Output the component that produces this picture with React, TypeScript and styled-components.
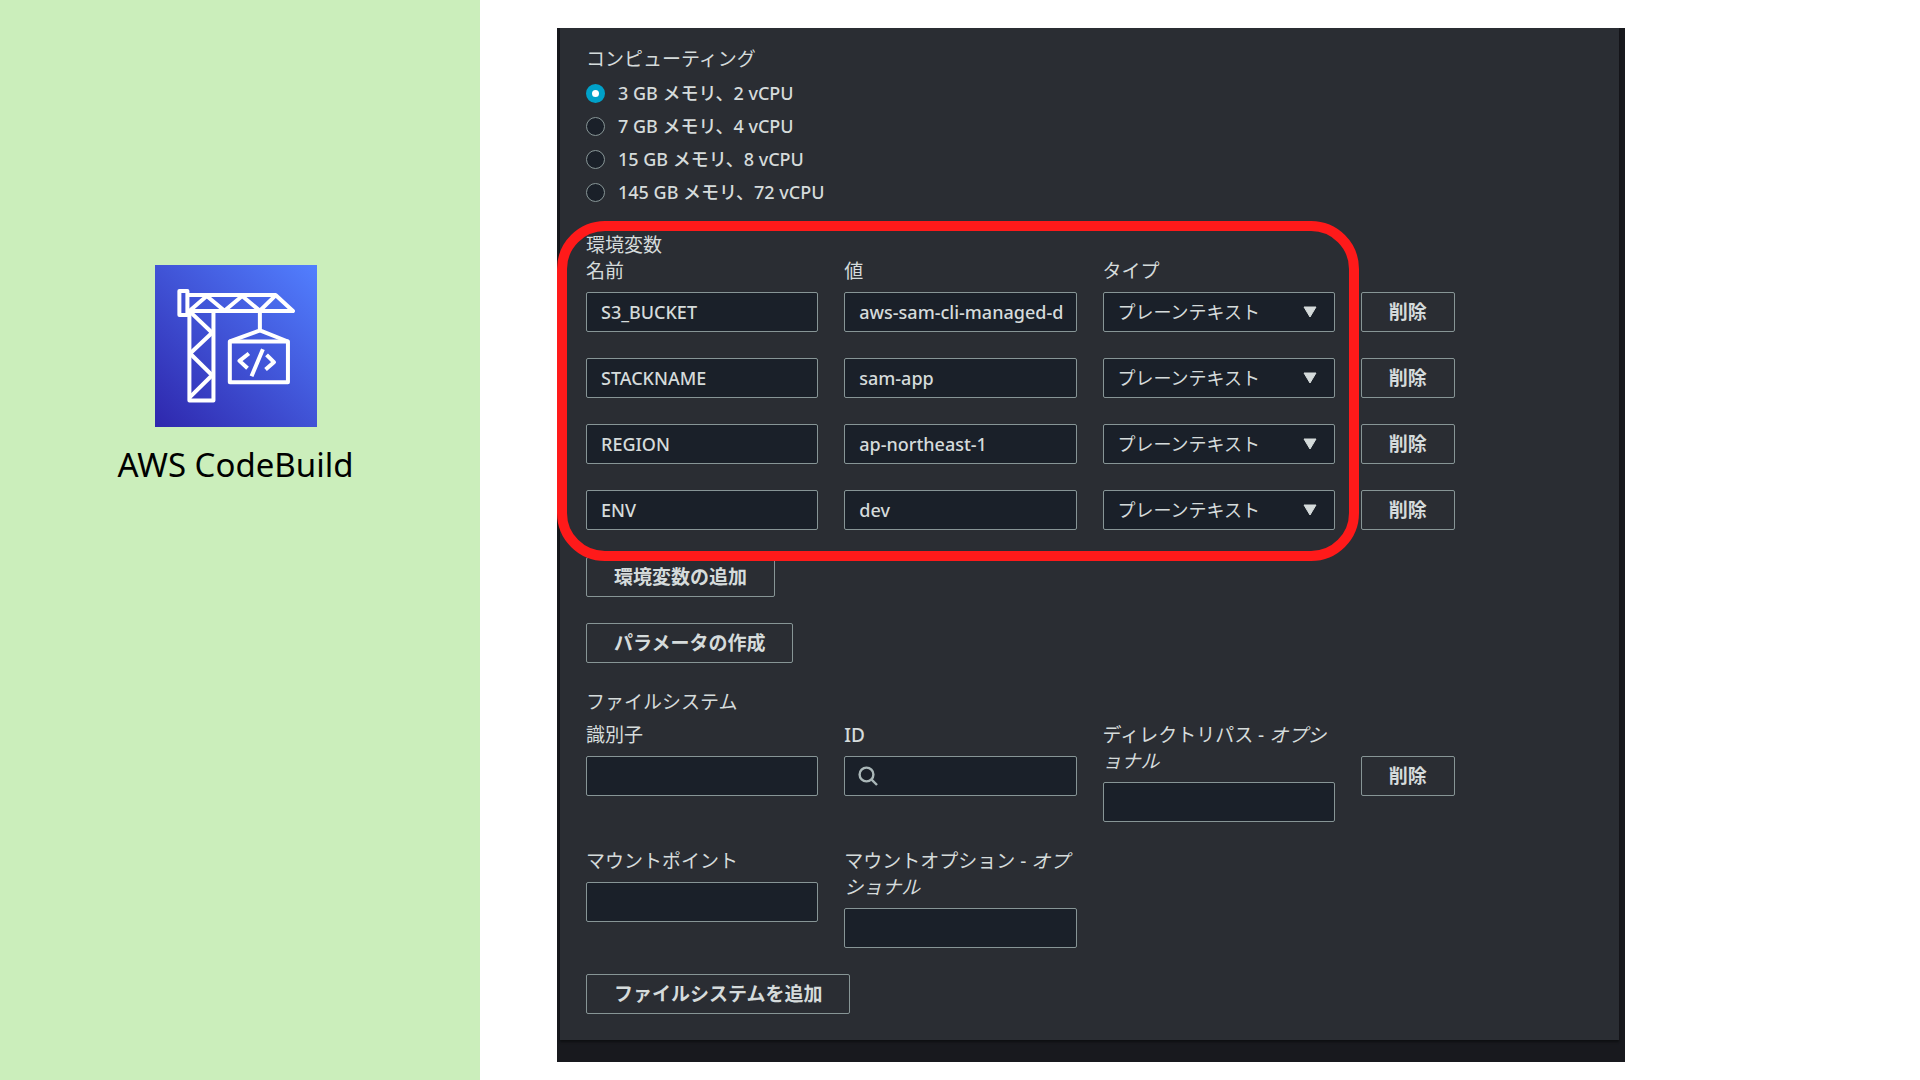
import React from "react";
import styled, { createGlobalStyle } from "styled-components";

const GlobalStyle = createGlobalStyle`
  *, *::before, *::after { box-sizing: border-box; }
  body {
    margin: 0;
    background: #ffffff;
    font-family: "Noto Sans", "Noto Sans CJK JP", sans-serif;
  }
  button, input, select { font: inherit; color: inherit; margin: 0; }
`;

const Page = styled.div`
  display: flex;
  min-height: 100vh;
`;

const Sidebar = styled.aside`
  flex: 0 0 25%;
  display: flex;
  flex-direction: column;
  align-items: center;
  gap: 16px;
  padding: 265px 9px 0 0;
  background: #cbeebb;
`;

const ServiceName = styled.h1`
  margin: 0;
  font-size: 33px;
  line-height: 44px;
  font-weight: 400;
  color: #000000;
`;

const Main = styled.main`
  flex: 1;
  min-width: 0;
  padding: 28px 295px 18px 77px;
`;

const Console = styled.div`
  padding: 0 6px 22px 3px;
  background: #18191e;
`;

const Card = styled.form`
  display: flex;
  flex-direction: column;
  gap: 27px;
  padding: 18px 26px 26px;
  background: #2a2d33;
  box-shadow: 0 2px 2px 0 #0e0f12;
  color: #d5dbdb;
  font-size: 18px;
  line-height: 26px;
`;

const Stack = styled.div<{ $gap: number }>`
  display: flex;
  flex-direction: column;
  align-items: stretch;
  gap: ${(p) => p.$gap}px;
`;

const Group = styled.fieldset`
  position: relative;
  min-width: 0;
  margin: 0;
  padding: 0;
  border: 0;
`;

const GroupTitle = styled.legend<{ $gap?: number }>`
  display: block;
  padding: 0;
  margin-bottom: ${(p) => p.$gap ?? 0}px;
  font-size: 19px;
`;

const Option = styled.label`
  display: flex;
  align-items: center;
  gap: 13px;
  font-weight: 500;
`;

const Radio = styled.input`
  appearance: none;
  width: 19px;
  height: 19px;
  border: 1px solid #879596;
  border-radius: 50%;
  background: #1a2029;
  &:checked {
    border: 6px solid #00a1c9;
    background: #ffffff;
  }
`;

const Columns = styled.div`
  display: grid;
  grid-template-columns: repeat(4, minmax(0, 1fr));
  column-gap: 26px;
  align-items: start;
`;

const Field = styled.div`
  display: flex;
  flex-direction: column;
  gap: 8px;
`;

const Label = styled.label<{ $medium?: boolean }>`
  font-size: 19px;
  font-weight: ${(p) => (p.$medium ? 500 : 400)};
  em { font-style: italic; }
`;

const TextBox = styled.input<{ $icon?: boolean }>`
  display: block;
  width: 100%;
  height: 40px;
  padding: 0 13px 0 ${(p) => (p.$icon ? 42 : 14)}px;
  border: 1px solid #879596;
  border-radius: 2px;
  background: #1a2029;
  font-weight: 500;
  outline: none;
`;

const Control = styled.div`
  position: relative;
`;

const Dropdown = styled.select`
  appearance: none;
  display: block;
  width: 100%;
  height: 40px;
  padding: 0 42px 0 14px;
  border: 1px solid #879596;
  border-radius: 2px;
  background: #1a2029;
`;

const Arrow = styled.svg`
  position: absolute;
  top: 14px;
  right: 18px;
  width: 14px;
  height: 12px;
  pointer-events: none;
`;

const Lens = styled.svg`
  position: absolute;
  top: 10px;
  left: 14px;
  width: 20px;
  height: 20px;
  pointer-events: none;
`;

const Button = styled.button`
  justify-self: start;
  align-self: flex-start;
  height: 40px;
  padding: 0 27px;
  border: 1px solid #879596;
  border-radius: 2px;
  background: transparent;
  font-weight: 700;
  font-size: 19px;
  line-height: 26px;
  white-space: nowrap;
`;

const BesideField = styled.div`
  padding-top: 34px;
`;

const Highlight = styled.div`
  position: absolute;
  z-index: 1;
  top: -37px;
  left: -29px;
  right: calc(25% - 18px);
  bottom: -31px;
  border: 10px solid #ff1a1a;
  border-radius: 48px;
  pointer-events: none;
`;

const sizes = [
  "3 GB メモリ、2 vCPU",
  "7 GB メモリ、4 vCPU",
  "15 GB メモリ、8 vCPU",
  "145 GB メモリ、72 vCPU",
];

const variables = [
  { name: "S3_BUCKET", value: "aws-sam-cli-managed-d" },
  { name: "STACKNAME", value: "sam-app" },
  { name: "REGION", value: "ap-northeast-1" },
  { name: "ENV", value: "dev" },
];

function CodeBuildLogo() {
  return (
    <svg width="162" height="162" viewBox="163 75 485 485" role="img" aria-label="CodeBuild">
      <defs>
        <linearGradient id="blue" x1="0" y1="1" x2="1" y2="0">
          <stop offset="0" stopColor="#2e27ad" />
          <stop offset="1" stopColor="#527fff" />
        </linearGradient>
      </defs>
      <rect x="163" y="75" width="485" height="485" fill="url(#blue)" />
      <g fill="none" stroke="#ffffff" strokeWidth="12" strokeLinejoin="round">
        <path d="M236 153H260V225H236Z" />
        <path d="M260 165H524L576 213H266V481H338V213" />
        <path d="M266 213L318 168L371 212L424 168L477 212L524 166" />
        <path d="M266 213L334 278L268 340L334 405L266 472" />
        <path d="M477 213V270M387 304L477 271L561 304" />
        <path d="M387 304H561V426H387Z" />
        <path d="M444 340L416 362L440 384M486 327L452 408M497 344L519 366L494 388" />
      </g>
    </svg>
  );
}

function TypeSelect({ label, id }: { label?: string; id: string }) {
  return (
    <Control>
      <Dropdown id={id} aria-label={label} defaultValue="plain">
        <option value="plain">プレーンテキスト</option>
      </Dropdown>
      <Arrow viewBox="0 0 14 12" aria-hidden="true">
        <path d="M1 1H13L7 11Z" fill="#d5dbdb" stroke="#d5dbdb" strokeLinejoin="round" />
      </Arrow>
    </Control>
  );
}

export default function App() {
  return (
    <Page lang="ja">
      <GlobalStyle />
      <Sidebar>
        <CodeBuildLogo />
        <ServiceName>AWS CodeBuild</ServiceName>
      </Sidebar>
      <Main>
        <Console>
          <Card onSubmit={(e) => e.preventDefault()}>
            <Group>
              <GroupTitle $gap={8}>コンピューティング</GroupTitle>
              <Stack $gap={7}>
                {sizes.map((size, i) => (
                  <Option key={size}>
                    <Radio type="radio" name="compute" defaultChecked={i === 0} />
                    <span>{size}</span>
                  </Option>
                ))}
              </Stack>
            </Group>

            <Group>
              <GroupTitle>環境変数</GroupTitle>
              <Stack $gap={8}>
                <Columns>
                  <Label htmlFor="name-0">名前</Label>
                  <Label htmlFor="value-0">値</Label>
                  <Label htmlFor="type-0">タイプ</Label>
                </Columns>
                <Stack $gap={26}>
                  {variables.map((v, i) => (
                    <Columns key={v.name}>
                      <TextBox id={`name-${i}`} aria-label="名前" defaultValue={v.name} />
                      <TextBox id={`value-${i}`} aria-label="値" defaultValue={v.value} />
                      <TypeSelect id={`type-${i}`} label="タイプ" />
                      <Button type="button">削除</Button>
                    </Columns>
                  ))}
                </Stack>
                <Highlight />
              </Stack>
            </Group>

            <Stack $gap={26}>
              <Button type="button">環境変数の追加</Button>
              <Button type="button">パラメータの作成</Button>
              <Group>
                <GroupTitle $gap={7}>ファイルシステム</GroupTitle>
                <Stack $gap={26}>
                  <Columns>
                    <Field>
                      <Label htmlFor="fs-identifier">識別子</Label>
                      <TextBox id="fs-identifier" />
                    </Field>
                    <Field>
                      <Label htmlFor="fs-id" $medium>ID</Label>
                      <Control>
                        <TextBox id="fs-id" $icon />
                        <Lens viewBox="0 0 20 20" fill="none" stroke="#aab7b8" strokeWidth="2.4" aria-hidden="true">
                          <circle cx="8.5" cy="8.5" r="6.9" />
                          <path d="M13.4 13.4L19 19" />
                        </Lens>
                      </Control>
                    </Field>
                    <Field>
                      <Label htmlFor="fs-path">
                        ディレクトリパス - <em>オプショナル</em>
                      </Label>
                      <TextBox id="fs-path" />
                    </Field>
                    <BesideField>
                      <Button type="button">削除</Button>
                    </BesideField>
                  </Columns>
                  <Columns>
                    <Field>
                      <Label htmlFor="fs-mount">マウントポイント</Label>
                      <TextBox id="fs-mount" />
                    </Field>
                    <Field>
                      <Label htmlFor="fs-options">
                        マウントオプション - <em>オプショナル</em>
                      </Label>
                      <TextBox id="fs-options" />
                    </Field>
                  </Columns>
                </Stack>
              </Group>
              <Button type="button">ファイルシステムを追加</Button>
            </Stack>
          </Card>
        </Console>
      </Main>
    </Page>
  );
}
